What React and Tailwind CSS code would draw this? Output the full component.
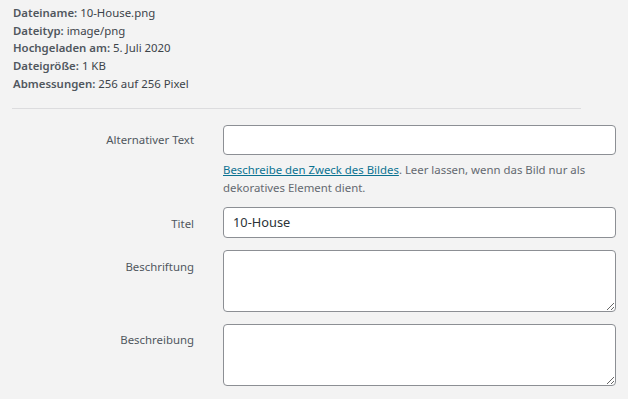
import React from 'react';

const info = [
    ['Dateiname:', '10-House.png'],
    ['Dateityp:', 'image/png'],
    ['Hochgeladen am:', '5. Juli 2020'],
    ['Dateigröße:', '1 KB'],
    ['Abmessungen:', '256 auf 256 Pixel'],
];

function Row({ label, labelPad, children, className }) {
    return (
        <div className={`flex ${className || ''}`}>
            <div className={`w-[194px] text-right text-[11.4px] leading-[18px] text-[#50575e] ${labelPad}`}>{label}</div>
            <div className="ml-[29px] w-[393px]">{children}</div>
        </div>
    );
}

export default function App() {
    return (
        <div className="w-[628px] h-[399px] overflow-hidden bg-[#f3f3f3]" style={{ fontFamily: '"Segoe UI", "Noto Sans", "Liberation Sans", sans-serif' }}>
            <div className="pt-[4px] pl-[13px] text-[11.4px] leading-[17.7px] text-[#3c434a]">
                {info.map(([k, v]) => (
                    <div key={k}>
                        <span className="font-semibold text-[#50575e]">{k}</span> {v}
                    </div>
                ))}
            </div>
            <div className="mt-[15px] ml-[12px] w-[569px] h-px bg-[#dcdcde]" />

            <Row label="Alternativer Text" labelPad="pt-[6px]" className="mt-[16px]">
                <div className="h-[30px] rounded-[4px] border border-[#8c8f94] bg-white" />
                <div className="mt-[6px] text-[11.4px] leading-[18px] text-[#646970]">
                    <span className="text-[#0b7291] underline">Beschreibe den Zweck des Bildes</span>
                    <span>. Leer lassen, wenn das Bild nur als dekoratives Element dient.</span>
                </div>
            </Row>

            <Row label="Titel" labelPad="pt-[8px]" className="mt-[10px]">
                <div className="h-[31px] rounded-[4px] border border-[#8c8f94] bg-white pl-[9px] text-[12.8px] leading-[29px] text-[#2c3338]">10-House</div>
            </Row>

            <Row label="Beschriftung" labelPad="pt-[8px]" className="mt-[12px]">
                <textarea readOnly className="block w-full h-[62px] rounded-[4px] border border-[#8c8f94] bg-white" />
            </Row>

            <Row label="Beschreibung" labelPad="pt-[7px]" className="mt-[12px]">
                <textarea readOnly className="block w-full h-[62px] rounded-[4px] border border-[#8c8f94] bg-white" />
            </Row>
        </div>
    );
}
